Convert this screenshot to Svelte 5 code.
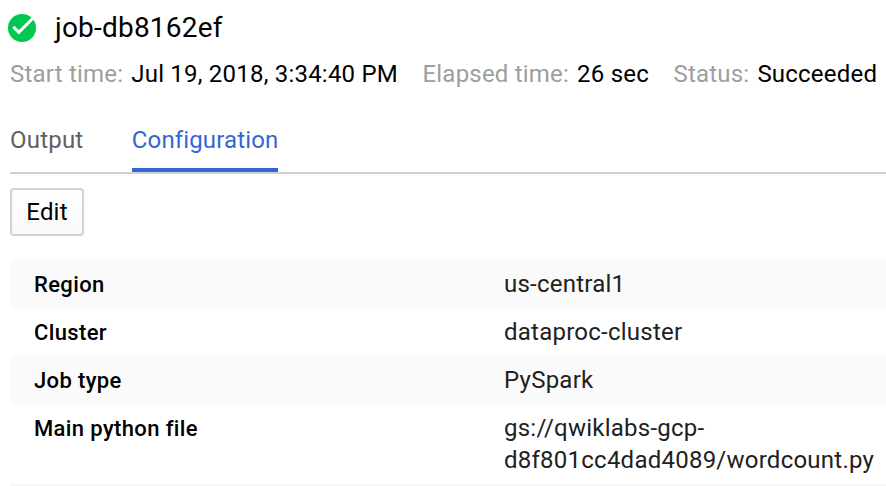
<script>
  const details = [
    ['Start time:', 'Jul 19, 2018, 3:34:40 PM'],
    ['Elapsed time:', '26 sec'],
    ['Status:', 'Succeeded']
  ];
  const rows = [
    ['Region', ['us-central1']],
    ['Cluster', ['dataproc-cluster']],
    ['Job type', ['PySpark']],
    ['Main python file', ['gs://qwiklabs-gcp-', 'd8f801cc4dad4089/wordcount.py']]
  ];
</script>

<main>
  <header>
    <svg width="28" height="28" viewBox="0 0 28 28" aria-hidden="true">
      <circle cx="14" cy="14" r="14" fill="#00c752" />
      <path d="M5.3 12.9L10.8 18.4L25.4 3.8" fill="none" stroke="#fff" stroke-width="3" />
    </svg>
    <h1>job-db8162ef</h1>
  </header>
  <div class="details">
    {#each details as [label, value]}
      <div class="detail"><span class="label">{label}</span><span>{value}</span></div>
    {/each}
  </div>
  <nav>
    <span class="tab">Output</span>
    <span class="tab active">Configuration</span>
  </nav>
  <button>Edit</button>
  <div class="table">
    {#each rows as [name, lines]}
      <div class="row">
        <strong>{name}</strong>
        <div class="value">{#each lines as line}<div>{line}</div>{/each}</div>
      </div>
    {/each}
  </div>
</main>

<style>
  :global(body) { background: #fff; overflow: hidden; }
  main { box-sizing: border-box; height: 486px; padding-left: 10px; overflow: hidden; font: 24px/32px Roboto, sans-serif; letter-spacing: 0.21px; color: #212121; display: flex; flex-direction: column; align-items: flex-start; white-space: nowrap; }
  main > * { flex-shrink: 0; }
  header { display: flex; align-items: center; gap: 19px; height: 56px; margin-left: -2px; }
  h1 { margin: 0; font-size: 28px; font-weight: 400; line-height: 36px; color: #000; }
  .details { display: flex; gap: 24.5px; height: 36px; line-height: 36px; color: #000; }
  .detail { display: flex; gap: 8px; }
  .label { color: #9e9e9e; }
  nav { box-sizing: border-box; align-self: stretch; display: flex; gap: 48.4px; height: 82px; padding-top: 32px; border-bottom: 2px solid #d0d0d0; color: #616161; }
  .tab { box-sizing: border-box; height: 48px; }
  .active { color: #3367d6; border-bottom: 4px solid #3367d6; letter-spacing: 0.14px; }
  button { box-sizing: border-box; width: 74px; height: 48px; margin: 14px 0 24px; padding: 0; border: 2px solid #d2d2d2; border-radius: 4px; background: linear-gradient(#fff, #f9f9f9); font: 24px/32px Roboto, sans-serif; letter-spacing: 0.2px; color: #000; }
  .table { align-self: stretch; }
  .row { display: flex; align-items: flex-start; padding: 8px 0 8px 24px; }
  .row:nth-child(odd) { background: #fafafa; }
  .row:last-child { border-bottom: 2px solid #f7f7f7; }
  strong { width: 470px; height: 32px; flex: none; font-size: 22px; line-height: 33px; font-weight: 500; letter-spacing: 0.37px; color: #000; }
  .value { line-height: 32px; letter-spacing: 0.24px; }
</style>
